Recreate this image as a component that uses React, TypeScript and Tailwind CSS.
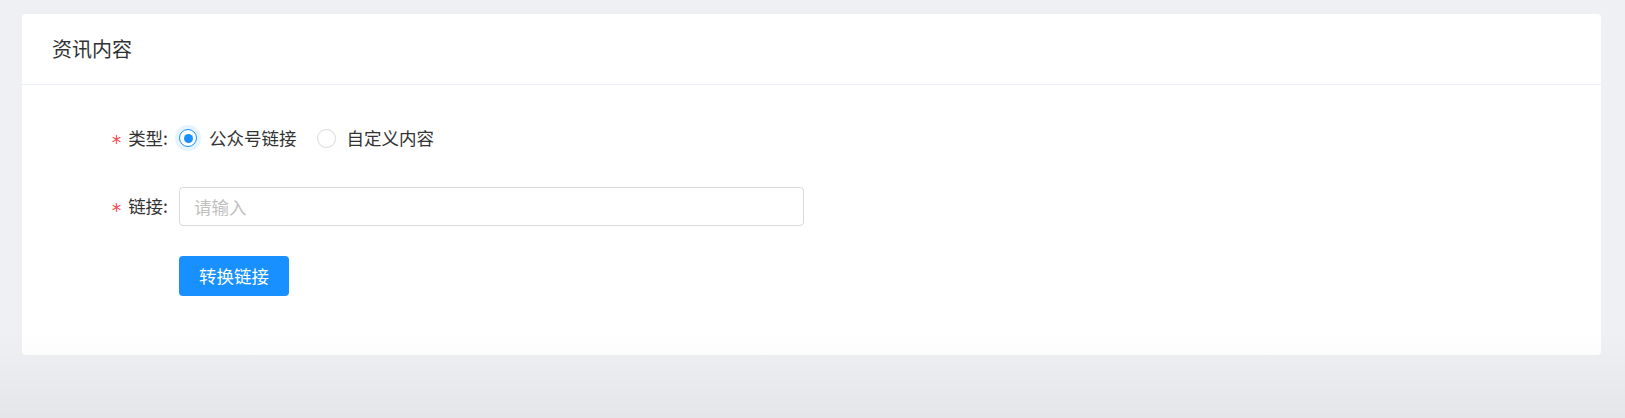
import React from "react";

export default function App() {
  const font = "font-['Noto_Sans_CJK_SC','Noto_Sans',sans-serif]";
  return (
    <div className={`relative h-[418px] w-full overflow-hidden bg-[#eff0f4] pt-[14px] pl-[22px] pr-[24px] ${font}`}>
      <div className="h-[341px] rounded-[4px] bg-white">
        <div className="flex h-[71px] items-center border-b border-[#ebeef5] pl-[30px] text-[20px] text-[#303133]">
          资讯内容
        </div>
        <div className="pt-[33px]">
          <div className="flex h-[40px] items-center">
            <div className="flex w-[157px] items-center justify-end pr-[11px] text-[17.5px] text-[#333]">
              <span className="mr-[7px] inline-block translate-y-[4px] font-['DejaVu_Sans',sans-serif] text-[19px] leading-none text-[#f5484f]">*</span>
              <span>类型:</span>
            </div>
            <label className="flex items-center">
              <span className="flex h-[18px] w-[18px] items-center justify-center rounded-full border-[1.5px] border-[#1890ff] bg-white shadow-[0_0_0_4px_#e6f4ff]">
                <span className="h-[9px] w-[9px] rounded-full bg-[#1890ff]" />
              </span>
              <span className="ml-[12px] text-[17.5px] text-[#333]">公众号链接</span>
            </label>
            <label className="ml-[20px] flex items-center">
              <span className="h-[19px] w-[19px] rounded-full border border-[#d9d9d9] bg-white" />
              <span className="ml-[11px] text-[17.5px] text-[#333]">自定义内容</span>
            </label>
          </div>
          <div className="mt-[28px] flex h-[40px] items-center">
            <div className="flex w-[157px] items-center justify-end pr-[11px] text-[17.5px] text-[#333]">
              <span className="mr-[7px] inline-block translate-y-[4px] font-['DejaVu_Sans',sans-serif] text-[19px] leading-none text-[#f5484f]">*</span>
              <span>链接:</span>
            </div>
            <input
              className="h-[39px] w-[625px] rounded-[4px] border border-[#d9d9d9] px-[14px] text-[17.5px] text-[#333] outline-none placeholder:text-[#bfbfbf]"
              placeholder="请输入"
            />
          </div>
          <div className="mt-[30px] pl-[157px]">
            <button className="h-[40px] w-[110px] rounded-[4px] bg-[#1890ff] text-[17.5px] text-white">
              转换链接
            </button>
          </div>
        </div>
      </div>
      <div className="pointer-events-none absolute bottom-0 left-0 right-0 h-[85px] bg-gradient-to-b from-transparent to-[rgba(0,0,0,0.045)]" />
    </div>
  );
}
